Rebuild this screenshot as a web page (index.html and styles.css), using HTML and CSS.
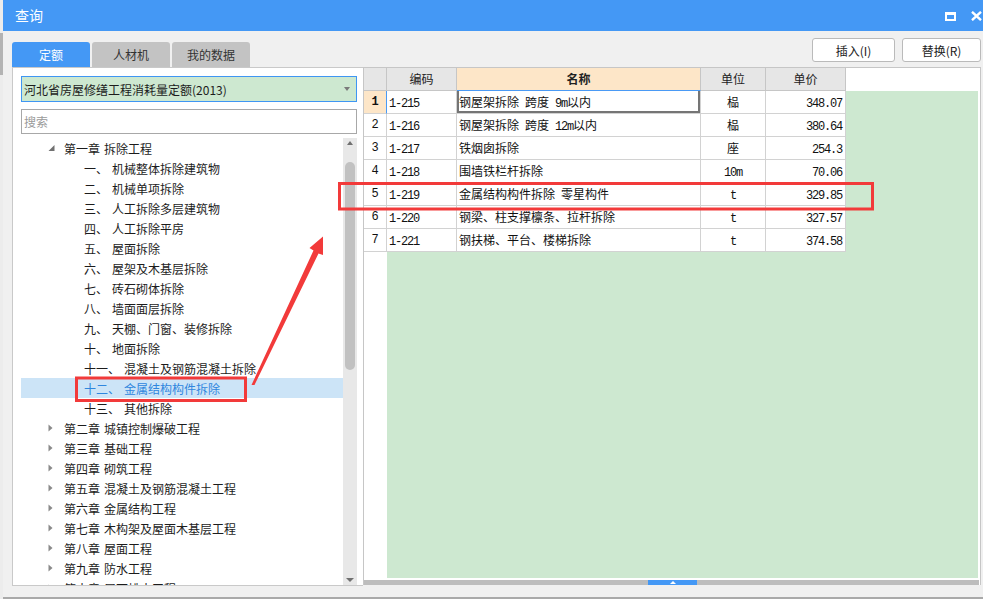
FILE: index.html
```html
<!DOCTYPE html>
<html lang="zh-CN">
<head>
<meta charset="utf-8">
<title>查询</title>
<link rel="stylesheet" href="styles.css">
</head>
<body>
<div class="screen">
  <div class="edge"><div class="edge-mark"></div></div>
  <div class="dialog">
    <div class="titlebar">
      <span class="title">查询</span>
      <div class="win-btns">
        <svg class="ico-max" width="11" height="9" viewBox="0 0 11 9"><rect x="1" y="1.5" width="9" height="6.5" fill="none" stroke="#fff" stroke-width="2"/><rect x="0" y="0" width="11" height="3" fill="#fff"/></svg>
        <svg class="ico-close" width="11" height="10" viewBox="0 0 11 10"><path d="M1 0.8 L10 9.2 M10 0.8 L1 9.2" stroke="#fff" stroke-width="2.4"/></svg>
      </div>
    </div>
    <div class="body">
      <div class="left">
        <div class="tabs">
          <div class="tab active">定额</div>
          <div class="tab">人材机</div>
          <div class="tab">我的数据</div>
        </div>
        <div class="panel">
          <div class="select"><span>河北省房屋修缮工程消耗量定额(2013)</span><span class="caret"></span></div>
          <div class="search">搜索</div>
          <div class="tree-wrap">
            <ul class="tree">
              <li class="ch"><svg class="tog" width="7" height="8" viewBox="0 0 7 8"><polygon points="6.5,1 6.5,7 0.5,7" fill="#707070"/></svg><span class="no">第一章</span>拆除工程</li>
              <li class="it"><span class="no">一、</span>机械整体拆除建筑物</li>
              <li class="it"><span class="no">二、</span>机械单项拆除</li>
              <li class="it"><span class="no">三、</span>人工拆除多层建筑物</li>
              <li class="it"><span class="no">四、</span>人工拆除平房</li>
              <li class="it"><span class="no">五、</span>屋面拆除</li>
              <li class="it"><span class="no">六、</span>屋架及木基层拆除</li>
              <li class="it"><span class="no">七、</span>砖石砌体拆除</li>
              <li class="it"><span class="no">八、</span>墙面面层拆除</li>
              <li class="it"><span class="no">九、</span>天棚、门窗、装修拆除</li>
              <li class="it"><span class="no">十、</span>地面拆除</li>
              <li class="it"><span class="no">十一、</span>混凝土及钢筋混凝土拆除</li>
              <li class="it sel"><span class="no">十二、</span>金属结构构件拆除</li>
              <li class="it"><span class="no">十三、</span>其他拆除</li>
              <li class="ch"><svg class="tog" width="7" height="8" viewBox="0 0 7 8"><polygon points="0.5,0.5 4.5,4 0.5,7.5" fill="#8a8a8a"/></svg><span class="no">第二章</span>城镇控制爆破工程</li>
              <li class="ch"><svg class="tog" width="7" height="8" viewBox="0 0 7 8"><polygon points="0.5,0.5 4.5,4 0.5,7.5" fill="#8a8a8a"/></svg><span class="no">第三章</span>基础工程</li>
              <li class="ch"><svg class="tog" width="7" height="8" viewBox="0 0 7 8"><polygon points="0.5,0.5 4.5,4 0.5,7.5" fill="#8a8a8a"/></svg><span class="no">第四章</span>砌筑工程</li>
              <li class="ch"><svg class="tog" width="7" height="8" viewBox="0 0 7 8"><polygon points="0.5,0.5 4.5,4 0.5,7.5" fill="#8a8a8a"/></svg><span class="no">第五章</span>混凝土及钢筋混凝土工程</li>
              <li class="ch"><svg class="tog" width="7" height="8" viewBox="0 0 7 8"><polygon points="0.5,0.5 4.5,4 0.5,7.5" fill="#8a8a8a"/></svg><span class="no">第六章</span>金属结构工程</li>
              <li class="ch"><svg class="tog" width="7" height="8" viewBox="0 0 7 8"><polygon points="0.5,0.5 4.5,4 0.5,7.5" fill="#8a8a8a"/></svg><span class="no">第七章</span>木构架及屋面木基层工程</li>
              <li class="ch"><svg class="tog" width="7" height="8" viewBox="0 0 7 8"><polygon points="0.5,0.5 4.5,4 0.5,7.5" fill="#8a8a8a"/></svg><span class="no">第八章</span>屋面工程</li>
              <li class="ch"><svg class="tog" width="7" height="8" viewBox="0 0 7 8"><polygon points="0.5,0.5 4.5,4 0.5,7.5" fill="#8a8a8a"/></svg><span class="no">第九章</span>防水工程</li>
              <li class="ch"><svg class="tog" width="7" height="8" viewBox="0 0 7 8"><polygon points="0.5,0.5 4.5,4 0.5,7.5" fill="#8a8a8a"/></svg><span class="no">第十章</span>屋面排水工程</li>
            </ul>
            <div class="vscroll">
              <span class="arr-up"></span>
              <div class="thumb"></div>
              <span class="arr-down"></span>
            </div>
          </div>
        </div>
      </div>
      <div class="right">
        <div class="toolbar">
          <button class="btn btn-ins">插入(I)</button>
          <button class="btn btn-rep">替换(R)</button>
        </div>
        <div class="sheet">
          <div class="hdr">
            <div class="cell c0"></div>
            <div class="cell c1">编码</div>
            <div class="cell c2 cur">名称</div>
            <div class="cell c3">单位</div>
            <div class="cell c4">单价</div>
          </div>
          <div class="grid-body">
            <div class="fill">
              <div class="row">
                <div class="cell c0 cur">1</div>
                <div class="cell c1"><span class="m">1-215</span></div>
                <div class="cell c2 focus">钢屋架拆除<span class="m"> </span>跨度<span class="m"> 9m</span>以内</div>
                <div class="cell c3">榀</div>
                <div class="cell c4"><span class="m">348.07</span></div>
              </div>
              <div class="row">
                <div class="cell c0">2</div>
                <div class="cell c1"><span class="m">1-216</span></div>
                <div class="cell c2">钢屋架拆除<span class="m"> </span>跨度<span class="m"> 12m</span>以内</div>
                <div class="cell c3">榀</div>
                <div class="cell c4"><span class="m">380.64</span></div>
              </div>
              <div class="row">
                <div class="cell c0">3</div>
                <div class="cell c1"><span class="m">1-217</span></div>
                <div class="cell c2">铁烟囱拆除</div>
                <div class="cell c3">座</div>
                <div class="cell c4"><span class="m">254.3</span></div>
              </div>
              <div class="row">
                <div class="cell c0">4</div>
                <div class="cell c1"><span class="m">1-218</span></div>
                <div class="cell c2">围墙铁栏杆拆除</div>
                <div class="cell c3"><span class="m">10m</span></div>
                <div class="cell c4"><span class="m">70.06</span></div>
              </div>
              <div class="row">
                <div class="cell c0">5</div>
                <div class="cell c1"><span class="m">1-219</span></div>
                <div class="cell c2">金属结构构件拆除<span class="m"> </span>零星构件</div>
                <div class="cell c3"><span class="m">t</span></div>
                <div class="cell c4"><span class="m">329.85</span></div>
              </div>
              <div class="row">
                <div class="cell c0">6</div>
                <div class="cell c1"><span class="m">1-220</span></div>
                <div class="cell c2">钢梁、柱支撑檩条、拉杆拆除</div>
                <div class="cell c3"><span class="m">t</span></div>
                <div class="cell c4"><span class="m">327.57</span></div>
              </div>
              <div class="row">
                <div class="cell c0">7</div>
                <div class="cell c1"><span class="m">1-221</span></div>
                <div class="cell c2">钢扶梯、平台、楼梯拆除</div>
                <div class="cell c3"><span class="m">t</span></div>
                <div class="cell c4"><span class="m">374.58</span></div>
              </div>
            </div>
          </div>
          <div class="hscroll"><div class="hthumb"><span class="hthumb-arr"></span></div></div>
        </div>
      </div>
    </div>
  </div>
  <svg class="annot" width="983" height="599" viewBox="0 0 983 599">
    <rect x="76.5" y="378" width="169" height="22.5" fill="none" stroke="#f23a3a" stroke-width="3"/>
    <rect x="339.5" y="183.5" width="533" height="25.5" fill="none" stroke="#f23a3a" stroke-width="3"/>
    <polygon points="251.5,385 313.5,250.5 309.5,248 323,236.5 323,255 318.5,253.5 254.5,385" fill="#f23a3a"/>
  </svg>
</div>
</body>
</html>
```
FILE: styles.css
```css
body {
  margin: 0;
}
.screen {
  display: flex;
  width: 983px;
  height: 599px;
  position: relative;
  overflow: hidden;
  font-family: "Noto Sans CJK SC", sans-serif;
  font-size: 12px;
  color: #1c1c1c;
  background: #f0f0f0;
}
.edge {
  width: 3px;
  flex: none;
  background: #ececec;
  padding-top: 33px;
  box-sizing: border-box;
}
.edge-mark {
  height: 42px;
  background: #b3b3b3;
}
.dialog {
  width: 980px;
  flex: none;
  display: flex;
  flex-direction: column;
  background: #f0f0f0;
  border-bottom: 2px solid #a9a9a9;
  box-sizing: border-box;
}
.titlebar {
  height: 31px;
  flex: none;
  background: #4498f5;
  display: flex;
  align-items: center;
  padding: 0 1px 0 12px;
  color: #fff;
  font-size: 14px;
}
.title {
  line-height: 31px;
}
.win-btns {
  margin-left: auto;
  display: flex;
  align-items: center;
  gap: 15px;
}
.ico-max {
  margin-top: 1px;
}
.body {
  flex: 1;
  display: flex;
  padding: 7px 0 0 9px;
  min-height: 0;
}
.left {
  width: 351px;
  flex: none;
  display: flex;
  flex-direction: column;
  padding-top: 4px;
}
.tabs {
  display: flex;
  gap: 2px;
  height: 25px;
  flex: none;
}
.tab {
  width: 78px;
  background: #c3c3c3;
  color: #333;
  text-align: center;
  line-height: 25px;
  border-radius: 3px 3px 0 0;
}
.tab.active {
  background: #4498f5;
  color: #fff;
}
.panel {
  height: 519px;
  box-sizing: border-box;
  border: 1px solid #c9c9c9;
  border-right: none;
  background: #fff;
  padding: 8px 6px 0 8px;
  display: flex;
  flex-direction: column;
}
.select {
  height: 26px;
  flex: none;
  box-sizing: border-box;
  border: 1px solid #3f96f3;
  background: #cde8d0;
  padding-left: 2px;
  display: flex;
  align-items: center;
  color: #1c1c1c;
}
.caret {
  margin-left: auto;
  margin-right: 6px;
  width: 0;
  height: 0;
  border-left: 3px solid transparent;
  border-right: 3px solid transparent;
  border-top: 4px solid #7a7a7a;
}
.search {
  margin-top: 7px;
  height: 25px;
  flex: none;
  box-sizing: border-box;
  border: 1px solid #a8a8a8;
  color: #9a9a9a;
  padding-left: 2px;
  line-height: 23px;
}
.tree-wrap {
  margin-top: 4px;
  flex: 1;
  display: flex;
  min-height: 0;
  overflow: hidden;
}
.tree {
  flex: 1;
  margin: 0;
  padding: 0;
  list-style: none;
  overflow: hidden;
}
.tree li {
  height: 20px;
  display: flex;
  align-items: center;
  white-space: nowrap;
}
.tree li.ch {
  padding-left: 27px;
}
.tree li.it {
  padding-left: 63px;
}
.tog {
  margin-right: 9px;
  flex: none;
}
.no {
  margin-right: 4px;
}
.tree li.sel {
  background: #cce4f7;
  color: #2f86de;
}
.vscroll {
  width: 14px;
  flex: none;
  background: #e8e8e8;
  display: flex;
  flex-direction: column;
  align-items: center;
}
.arr-up {
  margin-top: 3px;
  width: 0;
  height: 0;
  border-left: 3.5px solid transparent;
  border-right: 3.5px solid transparent;
  border-bottom: 4px solid #707070;
}
.thumb {
  margin-top: 17px;
  width: 10px;
  height: 208px;
  border-radius: 5px;
  background: #c1c1c1;
}
.arr-down {
  margin-top: auto;
  margin-bottom: 3px;
  width: 0;
  height: 0;
  border-left: 4px solid transparent;
  border-right: 4px solid transparent;
  border-top: 4px solid #707070;
}
.right {
  width: 620px;
  flex: none;
  display: flex;
  flex-direction: column;
  padding-right: 2px;
  box-sizing: border-box;
}
.toolbar {
  height: 24px;
  flex: none;
  display: flex;
  justify-content: flex-end;
  gap: 7px;
  margin-bottom: 5px;
}
.btn {
  font: inherit;
  background: #fff;
  border: 1px solid #bababa;
  border-radius: 3px;
  color: #222;
  padding: 0;
  height: 24px;
}
.btn-ins {
  width: 83px;
}
.btn-rep {
  width: 79px;
}
.sheet {
  height: 518px;
  box-sizing: border-box;
  border: 1px solid #c6c6c6;
  border-bottom: none;
  background: #fff;
  display: flex;
  flex-direction: column;
}
.hdr {
  display: flex;
  height: 23px;
  flex: none;
}
.cell {
  box-sizing: border-box;
  height: 23px;
  border-right: 1px solid #d2d2d2;
  border-bottom: 1px solid #d2d2d2;
  line-height: 22px;
  padding: 0 2px;
  white-space: nowrap;
  overflow: hidden;
  flex: none;
}
.hdr .cell {
  background: #e6e6e6;
  text-align: center;
  border-color: #c6c6c6;
  color: #222;
}
.hdr .cell.cur {
  background: #fde6c8;
  font-weight: bold;
  border-bottom-color: #4a9af5;
}
.c0 {
  width: 23px;
  text-align: center;
  padding: 0;
}
.c1 {
  width: 70px;
}
.c2 {
  width: 244px;
}
.c3 {
  width: 65px;
  text-align: center;
}
.c4 {
  width: 80px;
  text-align: right;
}
.row .c4 {
  padding-right: 3px;
}
.hdr .c4 {
  padding-right: 2px;
}
.grid-body {
  flex: 1;
  padding: 0 2px 2px 0;
  display: flex;
  flex-direction: column;
  min-height: 0;
}
.fill {
  flex: 1;
  background: linear-gradient(to right, #fff 23px, #cde8d0 23px);
}
.row {
  display: flex;
  height: 23px;
  width: 482px;
  background: #fff;
  color: #111;
}
.row .c0 {
  font-family: "Liberation Mono", monospace;
  font-size: 12px;
}
.row .c0.cur {
  background: #fde6c8;
  font-weight: bold;
  border-right-color: #4a9af5;
}
.row .c2.focus {
  box-shadow: inset 2px 0 #757575, inset -2px 0 #757575, inset 0 -2px #757575;
}
.m {
  font-family: "Liberation Mono", monospace;
  font-size: 12px;
  letter-spacing: -1.2px;
}
.hscroll {
  height: 5px;
  flex: none;
  margin-right: 1px;
  background: #bdbdbd;
  display: flex;
}
.hthumb {
  margin-left: 284px;
  width: 49px;
  height: 5px;
  background: #4498f5;
  display: flex;
  justify-content: center;
  align-items: center;
}
.hthumb-arr {
  width: 0;
  height: 0;
  border-left: 3px solid transparent;
  border-right: 3px solid transparent;
  border-bottom: 3px solid #fff;
}
.annot {
  position: absolute;
  left: 0;
  top: 0;
  pointer-events: none;
}
```
